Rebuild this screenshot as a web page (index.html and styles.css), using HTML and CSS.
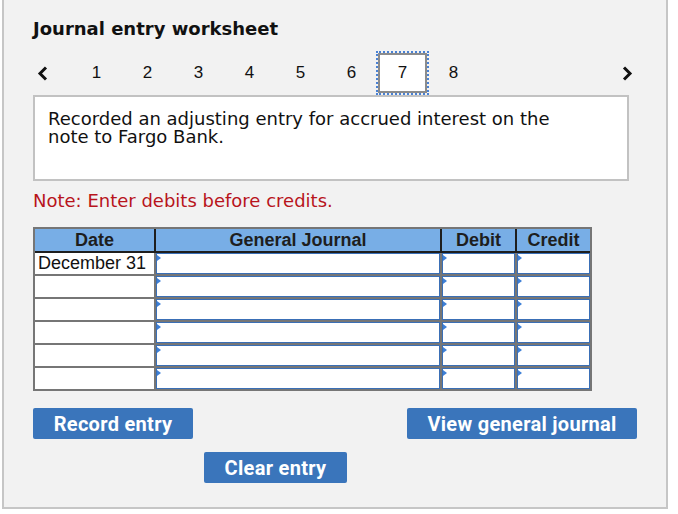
FILE: index.html
```html
<!DOCTYPE html>
<html>
<head>
<meta charset="utf-8">
<link rel="stylesheet" href="styles.css">
</head>
<body>
<div class="panel">
  <h1 class="title">Journal entry worksheet</h1>
  <div class="nav">
    <span class="chev chev-left"><svg width="11" height="15" viewBox="0 0 11 15"><polyline points="9,1.5 3,7.5 9,13.5" fill="none" stroke="#111" stroke-width="3"/></svg></span>
    <span class="step">1</span>
    <span class="step">2</span>
    <span class="step">3</span>
    <span class="step">4</span>
    <span class="step">5</span>
    <span class="step">6</span>
    <span class="step"><span class="active">7</span></span>
    <span class="step">8</span>
    <span class="chev chev-right"><svg width="11" height="15" viewBox="0 0 11 15"><polyline points="2,1.5 8,7.5 2,13.5" fill="none" stroke="#111" stroke-width="3"/></svg></span>
  </div>
  <div class="desc"><p>Recorded an adjusting entry for accrued interest on the note to Fargo Bank.</p></div>
  <p class="note">Note: Enter debits before credits.</p>
  <div class="jtable">
    <div class="jhead">
      <div class="hcell">Date</div>
      <div class="hcell">General Journal</div>
      <div class="hcell">Debit</div>
      <div class="hcell">Credit</div>
    </div>
    <div class="jbody">
      <div class="dcell">December 31</div><div class="icell"></div><div class="icell"></div><div class="icell"></div>
      <div class="dcell"></div><div class="icell"></div><div class="icell"></div><div class="icell"></div>
      <div class="dcell"></div><div class="icell"></div><div class="icell"></div><div class="icell"></div>
      <div class="dcell"></div><div class="icell"></div><div class="icell"></div><div class="icell"></div>
      <div class="dcell"></div><div class="icell"></div><div class="icell"></div><div class="icell"></div>
      <div class="dcell"></div><div class="icell"></div><div class="icell"></div><div class="icell"></div>
    </div>
  </div>
  <div class="btnrow">
    <button class="btn btn-record">Record entry</button>
    <button class="btn btn-view">View general journal</button>
  </div>
  <div class="btnrow2">
    <button class="btn btn-clear">Clear entry</button>
  </div>
</div>
</body>
</html>
```
FILE: styles.css
```css
html, body {
  margin: 0;
  padding: 0;
  background: #ffffff;
}
.panel {
  margin-left: 2px;
  width: 666px;
  height: 509px;
  box-sizing: border-box;
  background: #f2f2f2;
  border: 2px solid #c6c6c6;
  border-top: none;
  padding: 18px 0 0 29px;
}
.title {
  margin: 0;
  font-family: "DejaVu Sans", Verdana, sans-serif;
  font-weight: bold;
  font-size: 18px;
  line-height: 21px;
  color: #111;
}
.nav {
  margin-top: 12px;
  height: 44px;
  width: 600px;
  display: flex;
  align-items: center;
  font-family: "Liberation Sans", Arial, sans-serif;
  font-size: 17px;
  color: #111;
}
.chev {
  display: flex;
  align-items: center;
}
.chev-left {
  width: 38px;
  padding-left: 4px;
  box-sizing: border-box;
}
.chev-right {
  margin-left: auto;
}
.step {
  width: 51px;
  height: 44px;
  display: flex;
  align-items: center;
  justify-content: center;
}
.active {
  width: 49px;
  height: 40px;
  box-sizing: border-box;
  border: 2px solid #8c8c8c;
  background: #fff;
  outline: 2px dotted #4a82d4;
  display: flex;
  align-items: center;
  justify-content: center;
}
.desc {
  width: 596px;
  height: 86px;
  box-sizing: border-box;
  border: 2px solid #c2c2c2;
  background: #fff;
  padding: 13px 13px 0 13px;
}
.desc p {
  margin: 0;
  width: 520px;
  font-family: "DejaVu Sans", Verdana, sans-serif;
  font-size: 18px;
  line-height: 18px;
  color: #111;
}
.note {
  margin: 10px 0 0 0;
  font-family: "DejaVu Sans", Verdana, sans-serif;
  font-size: 18px;
  line-height: 20px;
  color: #b8141c;
}
.jtable {
  margin-top: 16px;
  width: 559px;
  box-sizing: border-box;
  border: 2px solid #767676;
  background: #767676;
  font-family: "Liberation Sans", Arial, sans-serif;
}
.jhead {
  display: grid;
  grid-template-columns: 119px 284px 73px 73px;
  column-gap: 2px;
  background: #1e1e1e;
  border-bottom: 2px solid #1e1e1e;
}
.hcell {
  background: #78aee6;
  height: 22px;
  line-height: 22px;
  text-align: center;
  font-weight: bold;
  font-size: 18px;
  color: #1e1e1e;
}
.jbody {
  display: grid;
  grid-template-columns: 119px 284px 73px 73px;
  grid-auto-rows: 21px;
  gap: 2px;
}
.dcell {
  background: #fff;
  font-size: 18px;
  line-height: 21px;
  padding-left: 3px;
  color: #111;
}
.icell {
  position: relative;
  background: #fff;
  border: 1px solid #3a6fb6;
}
.icell::before {
  content: "";
  position: absolute;
  left: 0;
  top: 1px;
  border-left: 4px solid #3d7fd6;
  border-top: 3px solid transparent;
  border-bottom: 3px solid transparent;
}
.btnrow {
  margin-top: 17px;
  width: 604px;
  display: flex;
  justify-content: space-between;
}
.btnrow2 {
  margin-top: 13px;
  padding-left: 171px;
}
.btn {
  border: none;
  border-radius: 2px;
  background: #3a75bb;
  color: #fff;
  font-family: Roboto, "Liberation Sans", sans-serif;
  font-weight: bold;
  font-size: 20px;
  letter-spacing: 0.3px;
  height: 31px;
  padding: 0;
}
.btn-record { width: 160px; }
.btn-view { width: 230px; }
.btn-clear { width: 143px; }
```
